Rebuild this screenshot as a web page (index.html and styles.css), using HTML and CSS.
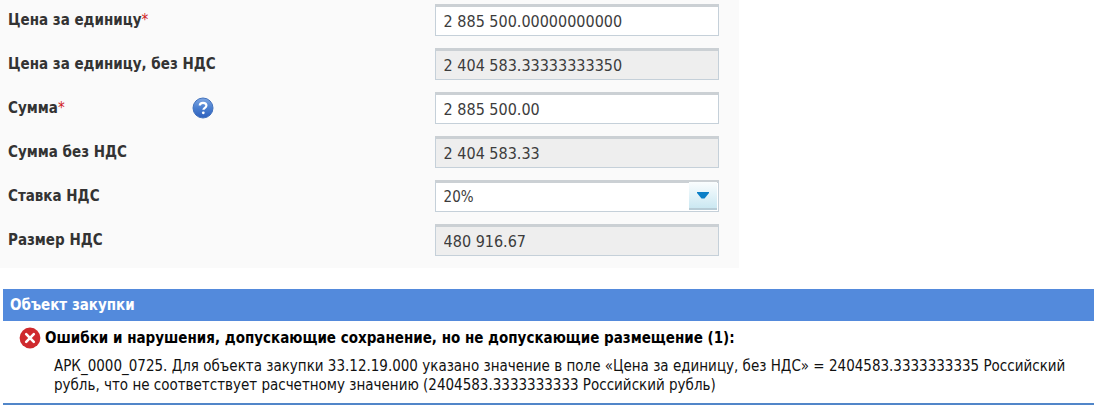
FILE: index.html
```
<!DOCTYPE html>
<html lang="ru">
<head>
    <meta charset="UTF-8">
    <meta name="viewport" content="width=device-width, initial-scale=1.0">
    <title>Объект закупки</title>
    <link rel="stylesheet" href="styles.css">
</head>
<body>

    <form class="price-form">
        <div class="row">
            <label class="name" for="price">Цена за единицу<span class="required">*</span></label>
            <input class="field" id="price" type="text" value="2 885 500.00000000000">
        </div>
        <div class="row">
            <label class="name" for="priceNoVat">Цена за единицу, без НДС</label>
            <input class="field" id="priceNoVat" type="text" value="2 404 583.33333333350" readonly>
        </div>
        <div class="row">
            <div class="name-cell">
                <label class="name" for="sum">Сумма<span class="required">*</span></label>
                <button class="help" type="button" aria-label="Справка">
                    <svg width="22" height="22" viewBox="0 0 22 22">
                        <defs>
                            <linearGradient id="helpFill" x1="0" y1="0" x2="0" y2="1">
                                <stop offset="0" stop-color="#7ea6e2"/>
                                <stop offset="0.5" stop-color="#4a7fd0"/>
                                <stop offset="1" stop-color="#2d5fbd"/>
                            </linearGradient>
                        </defs>
                        <circle cx="11" cy="11" r="10" fill="url(#helpFill)" stroke="#4272bd"/>
                        <path d="M7.8 8.6C7.8 6.6 9.2 5.8 11 5.8s3.4 1 3.4 2.7c0 2.2-3 2.3-3 4.3" fill="none" stroke="#fff" stroke-width="2.2"/>
                        <circle cx="11.3" cy="15.8" r="1.4" fill="#fff"/>
                    </svg>
                </button>
            </div>
            <input class="field" id="sum" type="text" value="2 885 500.00">
        </div>
        <div class="row">
            <label class="name" for="sumNoVat">Сумма без НДС</label>
            <input class="field" id="sumNoVat" type="text" value="2 404 583.33" readonly>
        </div>
        <div class="row">
            <label class="name" for="vatRate">Ставка НДС</label>
            <div class="select-box">
                <select class="field small" id="vatRate">
                    <option>20%</option>
                </select>
                <span class="arrow">
                    <svg width="12" height="7" viewBox="0 0 12 7"><path d="M0 0h12v1L7.5 6.5h-3L0 1z" fill="#0b7fc7"/></svg>
                </span>
            </div>
        </div>
        <div class="row">
            <label class="name" for="vatSize">Размер НДС</label>
            <input class="field" id="vatSize" type="text" value="480 916.67" readonly>
        </div>
    </form>

    <section class="errors">
        <h2 class="errors-header">Объект закупки</h2>
        <div class="errors-title">
            <svg width="22" height="22" viewBox="0 0 22 22">
                <circle cx="11" cy="11" r="10.4" fill="#cf2a2e"/>
                <path d="M7.2 7.2l7.6 7.6M14.8 7.2l-7.6 7.6" stroke="#fff" stroke-width="2.6" stroke-linecap="round"/>
            </svg>
            <h3>Ошибки и нарушения, допускающие сохранение, но не допускающие размещение (1):</h3>
        </div>
        <p class="errors-text">АРК_0000_0725. Для объекта закупки 33.12.19.000 указано значение в поле «Цена за единицу, без НДС» = 2404583.3333333335 Российский рубль, что не соответствует расчетному значению (2404583.3333333333 Российский рубль)</p>
    </section>

</body>
</html>
```
FILE: styles.css
```
* {
    box-sizing: border-box;
}
body {
    margin: 0;
    background: #fff;
    color: #111;
    font-family: Tahoma, "DejaVu Sans Condensed", sans-serif;
    font-size: 15px;
}
.price-form {
    display: flex;
    flex-direction: column;
    gap: 12px;
    width: 67%;
    padding: 4px 20px 12px 8px;
    background: #fafafa;
}
.row {
    display: grid;
    grid-template-columns: 3fr 2fr;
    align-items: center;
}
.name-cell {
    display: flex;
    align-items: center;
}
.name-cell .name {
    width: 184px;
}
.name {
    color: #333;
    font-weight: bold;
}
.required {
    color: #d0201c;
    font-weight: normal;
}
.help {
    display: flex;
    padding: 0;
    border: 0;
    background: none;
    cursor: pointer;
}
.field {
    width: 100%;
    height: 32px;
    padding: 0 8px;
    border: 1px solid #c5d0d9;
    border-top: 3px solid #cbd0d4;
    border-radius: 0;
    background: #fff;
    color: #3c3c3c;
    font-family: inherit;
    font-size: 16px;
}
.field:read-only:not(select) {
    background: #eee;
}
.field.small {
    font-size: 15px;
    appearance: none;
}
/* the arrow is laid over the right end of the select */
.select-box {
    display: grid;
}
.select-box > * {
    grid-area: 1 / 1;
}
.arrow {
    display: flex;
    align-items: center;
    justify-content: center;
    justify-self: end;
    width: 28px;
    margin: 2px;
    border-bottom: 2px solid #b7ccd6;
    background: linear-gradient(#fafdfe, #cbe8f2);
    pointer-events: none;
}
.errors {
    margin: 21px 9px 0 3px;
    border-bottom: 2px solid #5186c9;
}
.errors-header {
    margin: 0;
    padding: 0 7px;
    background: #538adc;
    color: #fff;
    font-size: 15px;
    line-height: 32px;
}
.errors-title {
    display: flex;
    align-items: center;
    gap: 4px;
    padding: 6px 16px;
}
.errors-title h3 {
    margin: 0;
    color: #000;
    font-size: 15px;
    line-height: 20px;
}
.errors-text {
    margin: 0;
    padding: 2px 16px 8px 51px;
    line-height: 19px;
}
```
